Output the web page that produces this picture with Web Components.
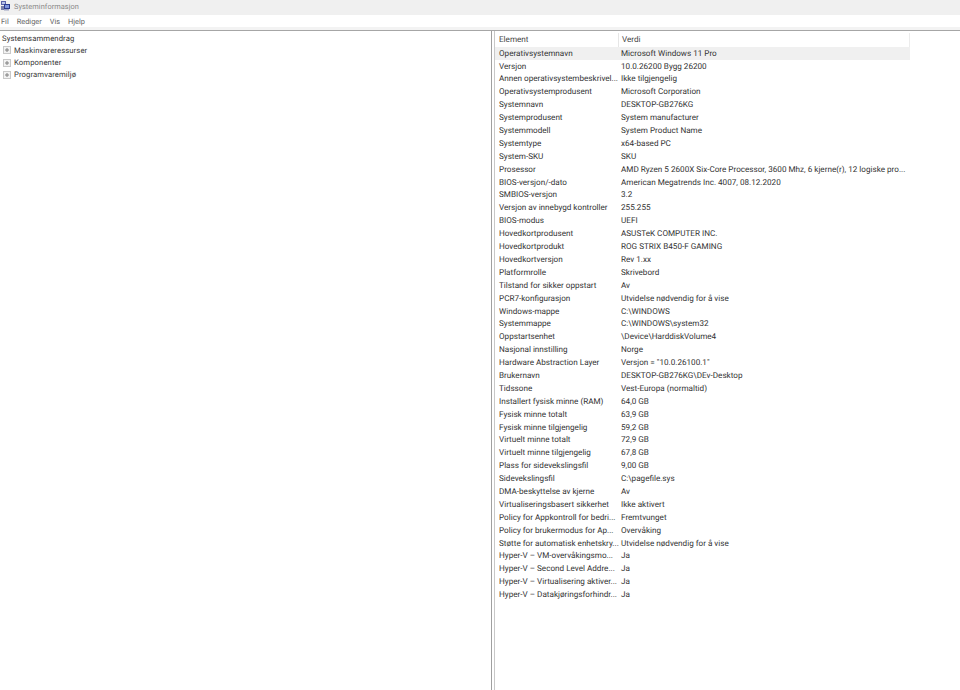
<!DOCTYPE html>
<html><head><meta charset="utf-8"><title>Systeminformasjon</title>
<style>html,body{margin:0;padding:0;background:#fff;height:100%;overflow:hidden}
body{font:8.15px Roboto,"Noto Sans",sans-serif;color:#333;text-rendering:geometricPrecision}
msinfo-app{width:960px;height:690px}</style></head><body>
<msinfo-app></msinfo-app>
<script>
const ROWS=[["Operativsystemnavn","Microsoft Windows 11 Pro"],["Versjon","10.0.26200 Bygg 26200"],["Annen operativsystembeskrivel...","Ikke tilgjengelig"],["Operativsystemprodusent","Microsoft Corporation"],["Systemnavn","DESKTOP-GB276KG"],["Systemprodusent","System manufacturer"],["Systemmodell","System Product Name"],["Systemtype","x64-based PC"],["System-SKU","SKU"],["Prosessor","AMD Ryzen 5 2600X Six-Core Processor, 3600 Mhz, 6 kjerne(r), 12 logiske pro..."],["BIOS-versjon/-dato","American Megatrends Inc. 4007, 08.12.2020"],["SMBIOS-versjon","3.2"],["Versjon av innebygd kontroller","255.255"],["BIOS-modus","UEFI"],["Hovedkortprodusent","ASUSTeK COMPUTER INC."],["Hovedkortprodukt","ROG STRIX B450-F GAMING"],["Hovedkortversjon","Rev 1.xx"],["Platformrolle","Skrivebord"],["Tilstand for sikker oppstart","Av"],["PCR7-konfigurasjon","Utvidelse nødvendig for å vise"],["Windows-mappe","C:\\WINDOWS"],["Systemmappe","C:\\WINDOWS\\system32"],["Oppstartsenhet","\\Device\\HarddiskVolume4"],["Nasjonal innstilling","Norge"],["Hardware Abstraction Layer","Versjon = \"10.0.26100.1\""],["Brukernavn","DESKTOP-GB276KG\\DEv-Desktop"],["Tidssone","Vest-Europa (normaltid)"],["Installert fysisk minne (RAM)","64,0 GB"],["Fysisk minne totalt","63,9 GB"],["Fysisk minne tilgjengelig","59,2 GB"],["Virtuelt minne totalt","72,9 GB"],["Virtuelt minne tilgjengelig","67,8 GB"],["Plass for sidevekslingsfil","9,00 GB"],["Sidevekslingsfil","C:\\pagefile.sys"],["DMA-beskyttelse av kjerne","Av"],["Virtualiseringsbasert sikkerhet","Ikke aktivert"],["Policy for Appkontroll for bedri...","Fremtvunget"],["Policy for brukermodus for Ap...","Overvåking"],["Støtte for automatisk enhetskry...","Utvidelse nødvendig for å vise"],["Hyper-V – VM-overvåkingsmo...","Ja"],["Hyper-V – Second Level Addre...","Ja"],["Hyper-V – Virtualisering aktiver...","Ja"],["Hyper-V – Datakjøringsforhindr...","Ja"]];
function def(n,html,setup){customElements.define(n,class extends HTMLElement{constructor(){super();this.attachShadow({mode:"open"}).innerHTML=html;}connectedCallback(){setup&&setup.call(this,this.shadowRoot)}})}
def("title-bar",`<style>:host{display:flex;align-items:center;gap:4px;height:12px;padding:0 0 3px 1px;background:#f0f0f0;color:#8a8a8a;font-size:7.4px;letter-spacing:.05px}svg{width:9px;height:10px;flex:none}</style>
<svg viewBox="0 0 9 10"><rect x="0" y="0" width="5" height="4" fill="#5a62a8"/><rect x="1" y="1" width="3" height="2" fill="#b8c4ea"/><rect x="3" y="3" width="6" height="5" fill="#2b3a8c"/><rect x="4" y="4" width="4" height="3" fill="#7f95dd"/><rect x="0" y="5" width="3" height="4" fill="#7a7fa8"/><rect x="3" y="8" width="5" height="1.5" fill="#9aa0c0"/></svg><slot></slot>`);
def("menu-bar",`<style>:host{display:flex;height:16px;align-items:center;padding:0 0 3px 1px;gap:8px;background:#fff;color:#666;font-size:7.4px;box-sizing:border-box;border-bottom:1px solid #a6a6a6;box-shadow:inset 0 -3px 0 #f3f3f3}</style><slot></slot>`);
def("tree-item",`<style>:host{display:flex;align-items:center;height:12.2px;padding-left:3px;gap:3px;white-space:nowrap;color:#3a3a3a;letter-spacing:.1px;font-size:7.7px}svg{width:8px;height:8px;flex:none}</style>
<svg viewBox="0 0 8 8"><rect x=".5" y=".5" width="7" height="7" fill="#f2f2f2" stroke="#c8c8c8"/><path d="M2 4h4M4 2v4" stroke="#808080" fill="none"/></svg><slot></slot>`);
def("tree-pane",`<style>:host{display:block;width:491px;flex:none;box-sizing:border-box;padding-top:1px}.root{height:12.4px;line-height:13px;padding-left:2px;color:#333;letter-spacing:.1px;font-size:7.7px}</style>
<div class="root">Systemsammendrag</div><slot></slot>`);
def("split-bar",`<style>:host{display:block;box-sizing:content-box;background:#fff;border-left:1px solid #a0a0a0;border-right:1px solid #c8c8c8;width:2px;flex:none}</style>`);
def("info-row",`<style>:host{display:grid;grid-template-columns:122px 1fr;height:12.905px;line-height:12.905px;white-space:nowrap;padding-left:4px;color:#333}:host([sel]){background:#f0f0f0}span{overflow:visible}</style>
<span><slot name="k"></slot></span><span><slot name="v"></slot></span>`);
def("info-pane",`<style>:host{display:block;flex:none;width:415px;box-sizing:border-box;padding-top:2px}.h{display:grid;grid-template-columns:122px 1fr;height:13.7px;line-height:13px;padding:0 0 0 4px;border-right:1px solid #ececec;color:#444}.h span+span{border-left:1px solid #e6e6e6;padding-left:3px;margin-left:-3px}</style>
<div class="h"><span>Element</span><span>Verdi</span></div><div id="b"></div>`,function(r){const b=r.getElementById("b");ROWS.forEach((x,i)=>{const e=document.createElement("info-row");if(!i)e.setAttribute("sel","");const k=document.createElement("span");k.slot="k";k.textContent=x[0];const v=document.createElement("span");v.slot="v";v.textContent=x[1];e.append(k,v);b.append(e)})});
def("msinfo-app",`<style>:host{display:flex;flex-direction:column;height:690px;overflow:hidden}.m{display:flex;flex:1;min-height:0}</style>
<title-bar>Systeminformasjon</title-bar><menu-bar><span>Fil</span><span>Rediger</span><span>Vis</span><span>Hjelp</span></menu-bar>
<div class="m"><tree-pane><tree-item>Maskinvareressurser</tree-item><tree-item>Komponenter</tree-item><tree-item>Programvaremiljø</tree-item></tree-pane><split-bar></split-bar><info-pane></info-pane></div>`);
</script></body></html>
